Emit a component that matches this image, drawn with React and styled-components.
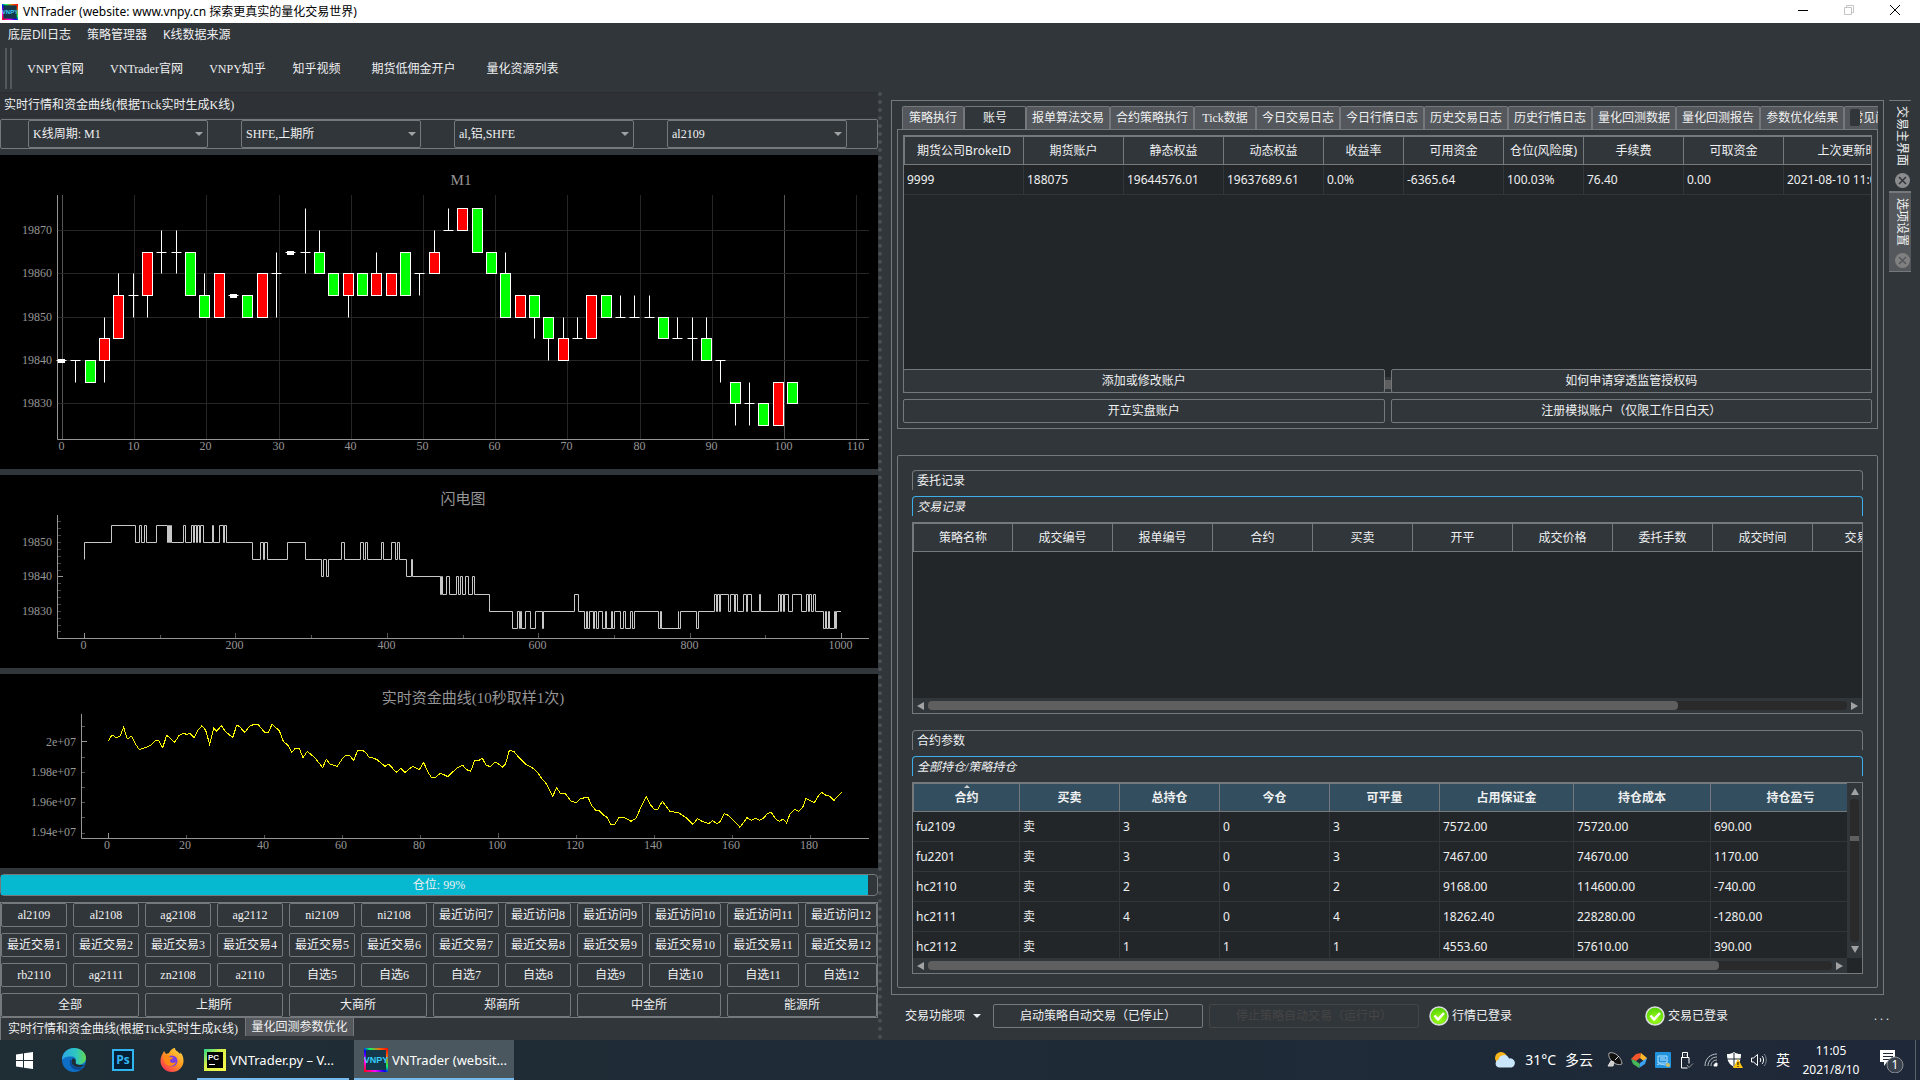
import React from 'react';
import styled, { createGlobalStyle, css } from 'styled-components';

const c = {
    bg: '#31363b',
    dark: '#232629',
    line: '#76797c',
    text: '#eff0f1',
    tab: '#54575b',
    axis: '#969696',
    blue: '#3daee9',
    cyan: '#06b9d1',
};

const song = '"Liberation Serif", "Noto Sans CJK SC", serif';
const hei = '"Noto Sans", "Noto Sans CJK SC", sans-serif';

const GlobalStyle = createGlobalStyle`
    * { box-sizing: border-box; }
    body { margin: 0; background: ${c.bg}; color: ${c.text}; font: 12px/16px ${song}; }
    button, select { font: inherit; color: inherit; margin: 0; padding: 0; border: 0; background: none; }
    svg { display: block; }
`;

/* ---------- data ---------- */

const toolbarLinks = [
    ['VNPY官网', 79], ['VNTrader官网', 103], ['VNPY知乎', 79],
    ['知乎视频', 79], ['期货低佣金开户', 115], ['量化资源列表', 103],
];

const combos = [
    ['K线周期', 'K线周期: M1'],
    ['交易所', 'SHFE,上期所'],
    ['品种', 'al,铝,SHFE'],
    ['合约', 'al2109'],
];

const range = (from, to, prefix) =>
    Array.from({ length: to - from + 1 }, (_, i) => prefix + (from + i));

const contracts = [
    'al2109', 'al2108', 'ag2108', 'ag2112', 'ni2109', 'ni2108', ...range(7, 12, '最近访问'),
    ...range(1, 12, '最近交易'),
    'rb2110', 'ag2111', 'zn2108', 'a2110', ...range(5, 12, '自选'),
];
const exchanges = ['全部', '上期所', '大商所', '郑商所', '中金所', '能源所'];

const mainTabs = [
    '策略执行', '账号', '报单算法交易', '合约策略执行', 'Tick数据', '今日交易日志', '今日行情日志',
    '历史交易日志', '历史行情日志', '量化回测数据', '量化回测报告', '参数优化结果', '常见问题',
];

const accountCols = [
    ['期货公司BrokeID', 120], ['期货账户', 100], ['静态权益', 100], ['动态权益', 100], ['收益率', 80],
    ['可用资金', 100], ['仓位(风险度)', 80], ['手续费', 100], ['可取资金', 100], ['上次更新时间', 140],
];
const accountRows = [
    ['9999', '188075', '19644576.01', '19637689.61', '0.0%', '-6365.64', '100.03%', '76.40', '0.00', '2021-08-10 11:05:01'],
];

const tradeCols = ['策略名称', '成交编号', '报单编号', '合约', '买卖', '开平', '成交价格', '委托手数', '成交时间', '交易所']
    .map(name => [name, 100]);

const positionCols = [
    ['合约', 107], ['买卖', 100], ['总持仓', 100], ['今仓', 110], ['可平量', 110],
    ['占用保证金', 134], ['持仓成本', 137], ['持仓盈亏', 160],
];
const positionRows = [
    ['fu2109', '卖', '3', '0', '3', '7572.00', '75720.00', '690.00'],
    ['fu2201', '卖', '3', '0', '3', '7467.00', '74670.00', '1170.00'],
    ['hc2110', '卖', '2', '0', '2', '9168.00', '114600.00', '-740.00'],
    ['hc2111', '卖', '4', '0', '4', '18262.40', '228280.00', '-1280.00'],
    ['hc2112', '卖', '1', '1', '1', '4553.60', '57610.00', '390.00'],
];

// open, close, high, low; all above 19800
const candles = [
    [40, 40, 40, 40], [40, 40, 40, 35], [40, 35, 40, 35], [40, 45, 50, 35], [45, 55, 60, 45],
    [55, 55, 60, 50], [55, 65, 65, 50], [65, 65, 70, 60], [65, 65, 70, 60], [65, 55, 65, 55],
    [55, 50, 60, 50], [50, 60, 60, 50], [55, 55, 55, 55], [55, 50, 55, 50], [50, 60, 60, 50],
    [60, 60, 65, 50], [65, 65, 65, 65], [65, 65, 75, 60], [65, 60, 70, 60], [60, 55, 60, 55],
    [55, 60, 60, 50], [60, 55, 60, 55], [55, 60, 65, 55], [55, 60, 60, 55], [65, 55, 65, 55],
    [60, 60, 60, 55], [60, 65, 70, 60], [70, 70, 75, 70], [70, 75, 75, 70], [75, 65, 75, 65],
    [65, 60, 65, 60], [60, 50, 65, 50], [50, 55, 55, 50], [55, 50, 55, 45], [50, 45, 50, 40],
    [40, 45, 50, 40], [45, 45, 50, 45], [45, 55, 55, 45], [55, 50, 55, 50], [50, 50, 55, 50],
    [50, 50, 55, 50], [50, 50, 55, 50], [50, 45, 50, 45], [45, 45, 50, 45], [45, 45, 50, 40],
    [45, 40, 50, 40], [40, 40, 40, 35], [35, 30, 35, 25], [30, 30, 35, 25], [30, 25, 30, 25],
    [25, 35, 35, 25], [35, 30, 35, 30],
];

// each entry: [level to return to, level of the spike, x positions where the price flips]
const flashRuns = [
    [50, 55, [332, 404, 418, 422, 431, 438, 469, 500, 503, 506, 509, 512, 549, 556, 572, 578, 583, 587, 590, 597, 600, 609, 635, 640, 656, 668, 673, 677]],
    [45, 50, [755, 781, 788, 793, 801, 860, 915]],
    [45, 40, [962, 970, 978, 983]],
    [45, 50, [1024, 1033, 1081, 1090, 1096, 1100, 1142, 1149, 1174, 1184, 1191, 1196]],
    [40, 45, [1219, 1234, 1237]],
    [35, 40, [1321, 1324, 1327, 1338, 1348, 1369, 1375, 1380, 1385, 1396, 1404, 1417, 1421]],
    [30, 25, [1467, 1537, 1550, 1556, 1560, 1564, 1576, 1591, 1604, 1625, 1629]],
    [30, 35, [1723, 1733]],
    [30, 25, [1751, 1758, 1761, 1766, 1778, 1782, 1789, 1794, 1805, 1815, 1819, 1833, 1836, 1842, 1861, 1869, 1876, 1891, 1895, 1903, 1973, 1980, 1983, 2033, 2035, 2040, 2087, 2093]],
    [30, 35, [2141, 2149, 2152, 2156, 2161, 2185, 2191, 2203, 2206, 2210, 2230, 2238, 2241, 2253, 2276, 2281, 2334, 2339, 2344, 2349, 2353, 2363, 2376, 2402, 2418, 2424, 2428, 2434, 2439, 2444]],
    [30, 25, [2470, 2475, 2478, 2484, 2487, 2501, 2504, 2508]],
];

const equity = [
    325, 829, 335, 811, 342, 813, 347, 818, 360, 814, 371, 787, 382, 822, 389, 817, 395, 814, 405, 835,
    418, 854, 430, 850, 450, 842, 468, 826, 476, 826, 488, 848, 500, 811, 511, 820, 524, 832, 537, 812,
    549, 805, 560, 808, 570, 806, 583, 818, 594, 795, 606, 782, 617, 796, 629, 838, 641, 790, 650, 799,
    664, 782, 676, 799, 698, 818, 710, 781, 718, 784, 734, 802, 749, 784, 762, 778, 775, 779, 794, 802,
    805, 802, 816, 778, 838, 797, 850, 829, 864, 841, 875, 862, 886, 850, 898, 850, 909, 878, 922, 859,
    945, 879, 968, 908, 979, 883, 991, 898, 1012, 904, 1028, 880, 1038, 871, 1048, 871, 1061, 886,
    1073, 856, 1087, 856, 1098, 863, 1108, 878, 1117, 878, 1131, 884, 1155, 904, 1166, 897, 1189, 922,
    1202, 910, 1215, 922, 1238, 904, 1258, 914, 1271, 892, 1284, 922, 1294, 937, 1306, 937, 1320, 926,
    1330, 928, 1343, 935, 1370, 910, 1388, 901, 1400, 914, 1412, 919, 1424, 887, 1434, 888, 1447, 880,
    1458, 900, 1470, 905, 1485, 892, 1495, 896, 1507, 907, 1517, 896, 1528, 856, 1542, 860, 1560, 881,
    1576, 897, 1597, 908, 1612, 922, 1625, 940, 1638, 955, 1658, 994, 1670, 968, 1681, 985, 1696, 986,
    1714, 1010, 1730, 1012, 1742, 1001, 1764, 996, 1774, 1020, 1787, 1036, 1797, 1037, 1812, 1051,
    1822, 1058, 1831, 1077, 1844, 1078, 1857, 1058, 1872, 1057, 1893, 1069, 1907, 1061, 1929, 1014,
    1939, 995, 1950, 1018, 1962, 1032, 1973, 1033, 1987, 1009, 1998, 1024, 2010, 1039, 2035, 1043,
    2058, 1058, 2079, 1078, 2092, 1061, 2108, 1070, 2126, 1076, 2138, 1067, 2150, 1076, 2160, 1070,
    2173, 1046, 2185, 1051, 2208, 1074, 2220, 1087, 2241, 1058, 2254, 1066, 2266, 1060, 2278, 1066,
    2290, 1060, 2302, 1046, 2314, 1042, 2326, 1061, 2338, 1069, 2349, 1062, 2360, 1074, 2370, 1046,
    2385, 1033, 2396, 1039, 2408, 1027, 2418, 1000, 2430, 1006, 2443, 1013, 2455, 993, 2465, 982,
    2478, 991, 2490, 994, 2502, 1006, 2525, 982,
];

/* ---------- window frame ---------- */

const Window = styled.div`
    display: flex;
    flex-direction: column;
    min-height: 100vh;
`;

const TitleBar = styled.header`
    display: flex;
    align-items: center;
    height: 23px;
    padding: 0 2px;
    gap: 5px;
    background: #fff;
    color: #000;
    font-family: ${hei};
`;

const WindowButtons = styled.div`
    display: flex;
    margin-left: auto;
`;

const WindowButton = styled.button`
    display: flex;
    justify-content: center;
    width: 46px;
    padding: 5px 0 8px;
`;

const MenuBar = styled.nav`
    display: flex;
    gap: 16px;
    padding: 4px 8px 3px;
    font-family: ${hei};
`;

const ToolBar = styled.div`
    display: flex;
    align-items: center;
    height: 46px;
    padding-left: 5px;
`;

const Handle = styled.span`
    width: 7px;
    height: 41px;
    margin: 0 4px 2px 0;
    border: solid ${c.tab};
    border-width: 0 2px;
`;

const ToolLink = styled.a`
    width: ${p => p.$w}px;
    text-align: center;
    color: inherit;
    text-decoration: none;
    white-space: nowrap;
`;

const Body = styled.main`
    flex: 1;
    display: grid;
    grid-template-columns: minmax(0, 882fr) minmax(0, 1038fr);
`;

/* ---------- left dock ---------- */

const Dock = styled.section`
    display: flex;
    flex-direction: column;
    border-right: 4px dotted #4b5055;
`;

const DockTitle = styled.h2`
    margin: 0 0 2px;
    padding: 4px;
    height: 25px;
    border: solid #2a2d31;
    border-width: 1px 0;
    background: #2e3236;
    font: inherit;
`;

const ComboBar = styled.div`
    display: flex;
    justify-content: space-between;
    padding: 0 30px 0 27px;
    margin-bottom: 6px;
    border: 1px solid ${c.line};
    border-radius: 2px;
`;

const Combo = styled.label`
    position: relative;
    width: 180px;
    height: 28px;

    &::after {
        content: '';
        position: absolute;
        right: 5px;
        top: 12px;
        border: 4px solid transparent;
        border-top-color: #a0a2a4;
        border-bottom: 0;
        pointer-events: none;
    }
`;

const Select = styled.select`
    appearance: none;
    width: 100%;
    height: 28px;
    padding: 0 4px;
    border: 1px solid ${c.line};
    border-radius: 2px;
`;

const Charts = styled.div`
    display: flex;
    flex-direction: column;
    gap: 6px;
`;

const Chart = styled.svg`
    width: 100%;
    height: auto;
    background: #000;
    fill: ${c.axis};
    font: 12px ${song};
`;

const Progress = styled.div`
    display: grid;
    height: 22px;
    margin: 6px 0;
    border: 1px solid ${c.line};
    border-radius: 4px;
    text-align: center;
    line-height: 20px;

    > * { grid-area: 1 / 1; }
`;

const ProgressFill = styled.span`
    background: ${c.cyan};
`;

const buttonLook = css`
    height: 24px;
    border: 1px solid ${c.line};
    border-radius: 2px;
    text-align: center;
    white-space: nowrap;
`;

const ContractGrid = styled.div`
    display: grid;
    grid-template-columns: repeat(9, minmax(0, 66fr)) repeat(3, minmax(0, 72fr));
    gap: 6px;
    border: 1px solid ${c.line};
`;

const ContractButton = styled.button`
    ${buttonLook}
    grid-column: span ${p => p.$span || 1};
`;

const DockTabs = styled.div`
    display: flex;
    height: 22px;
`;

const DockTab = styled.button`
    min-width: ${p => (p.$on ? 245 : 109)}px;
    height: ${p => (p.$on ? 22 : 18)}px;
    padding: 0 5px;
    border-left: 1px solid ${c.line};
    border-right: ${p => (p.$on ? 0 : 1)}px solid ${c.line};
    background: ${p => (p.$on ? c.bg : c.tab)};
`;

/* ---------- right side ---------- */

const Side = styled.section`
    display: grid;
    grid-template-columns: minmax(0, 1fr) 22px;
    grid-template-rows: 1fr 45px;
    column-gap: 5px;
    padding: 8px 9px 0;
`;

const Frame = styled.div`
    display: flex;
    flex-direction: column;
    padding: 5px 5px 6px;
    border: 1px solid ${c.line};
`;

const TabBar = styled.div`
    position: relative;
    display: flex;
    margin-left: 5px;
    overflow: hidden;
`;

const Tab = styled.button`
    flex: none;
    min-width: 62px;
    height: 23px;
    padding: 0 5px;
    border: 1px solid ${c.line};
    border-bottom: 0;
    border-radius: 2px 2px 0 0;
    background: ${p => (p.$on ? c.bg : c.tab)};
`;

const TabScroller = styled.span`
    position: absolute;
    right: 18px;
    top: 3px;
    width: 10px;
    height: 17px;
    border-radius: 2px;
    background: ${c.bg};
`;

const Pane = styled.div`
    padding: 5px;
    border: 1px solid ${c.line};
`;

const TableBox = styled.div`
    display: grid;
    grid-template-columns: minmax(0, 1fr) auto;
    grid-template-rows: 1fr 15px;
    height: ${p => p.$h}px;
    border: 1px solid ${c.line};
    background: ${c.dark};
    font-family: ${hei};
`;

const TableView = styled.div`
    overflow: hidden;
    min-height: 0;
`;

const Table = styled.table`
    table-layout: fixed;
    border-collapse: separate;
    border-spacing: 0;
    width: ${p => p.$w}px;
`;

const Th = styled.th`
    position: relative;
    height: 29px;
    padding: 0;
    border: solid ${c.line};
    border-width: 1px 1px 1px 0;
    background: ${p => (p.$blue ? '#334e5e' : c.bg)};
    font-weight: ${p => (p.$blue ? 700 : 400)};

    &:first-child { border-left-width: 1px; }
`;

const SortMark = styled.span`
    position: absolute;
    left: calc(50% - 3px);
    top: 1px;
    border: 3px solid transparent;
    border-bottom-color: #cfd1d2;
    border-top: 0;
`;

const Td = styled.td`
    height: 30px;
    padding: 0 3px;
    border: solid ${c.bg};
    border-width: 0 1px 1px 0;
    white-space: nowrap;
`;

const HBar = styled.div`
    display: flex;
    align-items: center;
    justify-content: space-between;
    padding: 0 4px;
    gap: 4px;
    background: ${c.bg};
`;

const VBar = styled(HBar)`
    flex-direction: column;
    width: 15px;
    padding: 5px 0;
`;

const Arrow = styled.span`
    border: 4px solid transparent;
    ${p => p.$to === 'left' && `border-right: 7px solid #a0a2a4; border-left: 0;`}
    ${p => p.$to === 'right' && `border-left: 7px solid #a0a2a4; border-right: 0;`}
    ${p => p.$to === 'up' && `border-bottom: 7px solid #a0a2a4; border-top: 0;`}
    ${p => p.$to === 'down' && `border-top: 7px solid #a0a2a4; border-bottom: 0;`}
`;

const Groove = styled.span`
    flex: 1;
    height: 9px;
    border-radius: 4px;
    background: #2a2a2a;
`;

const VGroove = styled(Groove)`
    width: 9px;
    padding-top: 37px;
`;

const Thumb = styled.span`
    display: block;
    height: ${p => p.$h || 9}px;
    border-radius: ${p => (p.$h ? 0 : 4)}px;
    background: #605f5f;
`;

const AccountButtons = styled.div`
    position: relative;
    display: grid;
    grid-template-columns: 1fr 1fr;
    gap: 6px;
    margin-top: -24px;
`;

const PaneButton = styled.button`
    ${buttonLook}
    background: ${c.bg};
`;

const Records = styled.div`
    display: flex;
    flex-direction: column;
    gap: 6px;
    margin-top: 26px;
    padding: 14px 14px 13px;
    border: 1px solid ${c.line};
    border-radius: 2px;
`;

const GroupTitle = styled.h3`
    height: 20px;
    margin: ${p => (p.$later ? '10px 0 0' : 0)};
    padding: 2px 4px;
    border: 1px solid ${p => (p.$active ? c.blue : c.line)};
    border-bottom: 0;
    border-radius: 4px 4px 0 0;
    font: inherit;
    font-style: ${p => (p.$active ? 'italic' : 'normal')};
`;

const SideTabs = styled.div`
    display: flex;
    flex-direction: column;
`;

const SideTab = styled.div`
    display: flex;
    flex-direction: column;
    align-items: center;
    justify-content: space-between;
    height: ${p => (p.$on ? 92 : 80)}px;
    padding: 5px 0 3px 4px;
    border: solid ${c.line};
    border-width: 1px 0;
    background: ${p => (p.$on ? c.bg : c.tab)};
`;

const SideLabel = styled.button`
    writing-mode: vertical-rl;
    text-orientation: sideways;
`;

const StatusBar = styled.footer`
    grid-column: 1 / -1;
    display: flex;
    align-items: center;
    padding: 0 22px 3px 14px;
`;

const DropButton = styled.button`
    display: flex;
    align-items: center;
    gap: 8px;
    width: 88px;

    &::after {
        content: '';
        border: 4px solid transparent;
        border-top-color: ${c.text};
        border-bottom: 0;
    }
`;

const StatusButton = styled(PaneButton)`
    width: 210px;
    margin-right: 6px;

    &:disabled {
        border-color: #454545;
        color: #454545;
    }
`;

const Status = styled.span`
    display: flex;
    align-items: center;
    gap: 3px;
    width: 216px;
    padding-left: 4px;
`;

const More = styled.span`
    display: flex;
    gap: 3px;
    margin-left: auto;
`;

/* ---------- task bar ---------- */

const TaskBar = styled.footer`
    display: flex;
    align-items: stretch;
    height: 40px;
    background: linear-gradient(90deg, #1f2d35, #1e2b37 60%, #1f2838);
    color: #fff;
    font-family: ${hei};
`;

const TaskIcon = styled.button`
    display: grid;
    place-items: center;
    width: 49px;
`;

const Task = styled.button`
    display: flex;
    align-items: center;
    gap: 4px;
    width: ${p => (p.$on ? 160 : 152)}px;
    margin-left: ${p => (p.$on ? 5 : 1)}px;
    padding: 2px 4px 0 ${p => (p.$on ? 10 : 7)}px;
    border-bottom: 2px solid #76b9ed;
    background: ${p => (p.$on ? '#4a575e' : 'none')};
    font-size: 13px;
    text-align: left;
    white-space: nowrap;
`;

const Tray = styled.div`
    display: flex;
    align-items: center;
    margin-left: auto;
    padding-right: 4px;
    border-right: 1px solid #59636d;
    margin-right: 4px;
`;

const Weather = styled.button`
    display: flex;
    align-items: center;
    gap: 9px;
    margin-right: 10px;
    font-size: 14px;
`;

const TrayIcon = styled.button`
    display: grid;
    place-items: center;
    width: 24px;
    height: 40px;
    font-size: 14px;
`;

const Clock = styled.time`
    width: 72px;
    text-align: center;
    line-height: 19px;
`;

const Notify = styled.button`
    width: 44px;
    padding-left: 12px;
`;

/* ---------- icons ---------- */

const VnpyIcon = ({ size }) => (
    <svg width={size} height={size} viewBox="0 0 24 24">
        <defs>
            <linearGradient id="rainbow" x1="0" y1="1" x2="1" y2="0">
                <stop offset="0" stopColor="#f00" />
                <stop offset="0.25" stopColor="#f0f" />
                <stop offset="0.45" stopColor="#00f" />
                <stop offset="0.6" stopColor="#0f6" />
                <stop offset="0.8" stopColor="#f60" />
                <stop offset="1" stopColor="#f00" />
            </linearGradient>
        </defs>
        <rect width="24" height="24" fill="url(#rainbow)" />
        <rect x="2" y="2" width="20" height="20" fill="#15384a" />
        <text x="12" y="15" fontSize="9" fontWeight="700" fontFamily="Liberation Sans, sans-serif" textAnchor="middle" fill="#35cdfb">VNPY</text>
    </svg>
);

const EdgeIcon = () => (
    <svg width="24" height="24" viewBox="0 0 24 24">
        <defs>
            <linearGradient id="edgeTop" x1="0" x2="1">
                <stop offset="0" stopColor="#2aa8e6" />
                <stop offset="0.6" stopColor="#2fc7c0" />
                <stop offset="1" stopColor="#62d94f" />
            </linearGradient>
        </defs>
        <circle cx="12" cy="12" r="12" fill="#0f6fc6" />
        <path d="M0 12C0 5 5 0 12 0c7 0 12 4.500 12 10 0 4-3 6.500-7 6.500-3 0-4-1-3.500-2 1.200-2 .5-5.500-3.500-6C5 8 1 10 0 12z" fill="url(#edgeTop)" />
        <path d="M8 12c-1 5 2 10 8 10 3 0 5-1 7-4-2 2-5 2-8 1.500C11 19 9 16 9.500 12z" fill="#0a4a94" />
        <path d="M10.500 10.500c-2 3-.5 7 3.500 8.500 4 1.200 7-.5 9-2.500-3 1-9 1-9.500-2 .8-2 0-4-3-4z" fill="#1f2d35" />
    </svg>
);

const PsIcon = () => (
    <svg width="22" height="22" viewBox="0 0 22 22">
        <rect x="1" y="1" width="20" height="20" fill="#061e34" stroke="#31b5f2" strokeWidth="2" />
        <text x="11" y="15" fontSize="12" fontWeight="700" fontFamily="Open Sans, sans-serif" textAnchor="middle" fill="#31b5f2">Ps</text>
    </svg>
);

const FirefoxIcon = () => (
    <svg width="24" height="24" viewBox="0 0 24 24">
        <defs>
            <linearGradient id="fox" x1="1" y1="0" x2="0.200" y2="1">
                <stop offset="0" stopColor="#ffe14a" />
                <stop offset="0.5" stopColor="#ff9a1f" />
                <stop offset="1" stopColor="#ff2f56" />
            </linearGradient>
        </defs>
        <path d="M3 5l1-2 2 3 3-1c1-3 4-5 6-5 0 3 3 3 5 6 1-.5 0-1 0-2 3 3 3.500 6 3.500 9A11.500 11 0 0 1 .5 13c0-3 1-6 2.500-8z" fill="url(#fox)" />
        <circle cx="12" cy="13" r="5.500" fill="#7b3fe0" />
        <path d="M4 8c3-1 5 0 6 1l3 .5c0 1.500-2 1.800-3 2.500-.5 3 3 4 6 2-1 4-6 5-9 3S4 11 4 8z" fill="#ff8a16" />
    </svg>
);

const PyCharmIcon = () => (
    <svg width="22" height="22" viewBox="0 0 22 22">
        <defs>
            <linearGradient id="py" x1="0" y1="0" x2="1" y2="1">
                <stop offset="0" stopColor="#21d789" />
                <stop offset="0.4" stopColor="#d6f04a" />
                <stop offset="1" stopColor="#fcf84a" />
            </linearGradient>
        </defs>
        <rect width="22" height="22" fill="url(#py)" />
        <rect x="3" y="3" width="16" height="16" fill="#000" />
        <text x="4" y="11" fontSize="8" fontWeight="700" fontFamily="Liberation Sans, sans-serif" fill="#fff">PC</text>
        <rect x="5" y="15" width="6" height="1" fill="#fff" />
    </svg>
);

const WindowsIcon = () => (
    <svg width="17" height="17" viewBox="0 0 17 17" fill="#fff">
        <path d="M0 2.500l7-1V8H0zM8 1.300L17 0v8H8zM0 9h7v6.500l-7-1zM8 9h9v8l-9-1.300z" />
    </svg>
);

const CheckIcon = () => (
    <svg width="20" height="20" viewBox="0 0 20 20">
        <defs>
            <radialGradient id="ok" cx="0.5" cy="0.700" r="0.700">
                <stop offset="0" stopColor="#a2ff1a" />
                <stop offset="1" stopColor="#4fd000" />
            </radialGradient>
        </defs>
        <circle cx="10" cy="10" r="9" fill="url(#ok)" stroke="#d9dcda" strokeWidth="1.500" />
        <path d="M5.500 9.500l3.500 4 6-6.500" fill="none" stroke="#fff" strokeWidth="2.500" />
    </svg>
);

const CloseIcon = ({ dim }) => (
    <svg width="15" height="15" viewBox="0 0 15 15">
        <circle cx="7.500" cy="7.500" r="7.500" fill={dim ? '#808080' : '#8b8c8d'} />
        <path d="M4 4l7 7M11 4l-7 7" stroke={dim ? '#54575b' : '#31363b'} strokeWidth="1.500" />
    </svg>
);

const WeatherIcon = () => (
    <svg width="21" height="16" viewBox="0 0 21 16">
        <circle cx="6" cy="6" r="6" fill="#f9b61c" />
        <path d="M4 15.500a4 4 0 0 1-.5-7.800A5.500 5.500 0 0 1 14 6.500a4.600 4.600 0 1 1 2.500 9z" fill="#c9e6fa" />
    </svg>
);

const SatelliteIcon = () => (
    <svg width="16" height="16" viewBox="0 0 16 16">
        <path d="M2 1c6-2 13 5 13 11-6 3-15-5-13-11z" fill="#111" stroke="#aaa" />
        <path d="M1 14l3-5 3 1-1 4zM8 8l4-4" fill="#ccc" stroke="#ddd" />
    </svg>
);

const CubeIcon = () => (
    <svg width="16" height="16" viewBox="0 0 16 16">
        <path d="M0 7l5-5 5-1-1 5-4 3z" fill="#f5542c" />
        <path d="M10 1l6 5-2 4-5-4z" fill="#ffb928" />
        <path d="M16 6l-2 6-6 4 1-5 4-3z" fill="#3aa0f2" />
        <path d="M0 7l5 2 4 3-1 4-6-4z" fill="#46b85a" />
    </svg>
);

const NetIcon = () => (
    <svg width="16" height="16" viewBox="0 0 16 16">
        <rect width="16" height="16" rx="1" fill="#2093dc" />
        <path d="M3 4h9v7H3zM5 6h5M5 8h6M2 13c3-3 8 2 12-1" fill="none" stroke="#b9e2ff" />
        <circle cx="13" cy="13" r="2" fill="#cdbf64" />
    </svg>
);

const UsbIcon = () => (
    <svg width="14" height="17" viewBox="0 0 14 17" fill="none" stroke="#fff">
        <path d="M2.500 5V.5h5V5M1 5.500h8v6M1.500 5v11h6M4 3h0.500M6 3h0.500" />
        <path d="M7 13l2 2.500 4-4" stroke="#999" />
    </svg>
);

const WifiIcon = () => (
    <svg width="14" height="14" viewBox="0 0 14 14" fill="none" stroke="#b9c0c6">
        <path d="M1 13C1 6 6 1 13 1M4 13c0-5 4-9 9-9M7 13c0-4 3-6 6-6" />
        <path d="M10 13c0-2 1-3 3-3v3z" fill="#fff" stroke="#fff" />
    </svg>
);

const ShieldIcon = () => (
    <svg width="16" height="16" viewBox="0 0 16 16">
        <path d="M7 0c2 1.500 4 2 7 2 0 7-2 10-7 13C2 12 0 9 0 2c3 0 5-.5 7-2z" fill="#fff" />
        <path d="M7 1v13M0 7h14" stroke="#1f2b36" />
        <path d="M11 7l5 9H6z" fill="#ffc20e" />
        <path d="M11 10v3M11 14v1" stroke="#000" />
    </svg>
);

const SpeakerIcon = () => (
    <svg width="16" height="14" viewBox="0 0 16 14" fill="none" stroke="#fff">
        <path d="M.5 5v4h2l4 3.500v-11L2.500 5zM9 5c1 1 1 3 0 4M11 3c2 2 2 6 0 8" />
        <path d="M13 1c3 3 3 9 0 12" stroke="#7c858c" />
    </svg>
);

const NotifyIcon = () => (
    <svg width="26" height="26" viewBox="0 0 26 26">
        <path d="M1 3h15v12H8l-3 4v-4H1z" fill="#fff" />
        <path d="M4 6.500h10M4 9.500h10M4 12.500h6" stroke="#1f2838" />
        <circle cx="16" cy="18" r="8" fill="#39414c" stroke="#8b9097" />
        <text x="16" y="22" fontSize="12" textAnchor="middle" fill="#fff">1</text>
    </svg>
);

/* ---------- charts ---------- */

const Axes = ({ x, bottom }) => (
    <path d={`M${x} 40V${bottom}H869`} fill="none" stroke={c.axis} />
);

const KLineChart = () => {
    const px = v => Math.round(62 + v * 7.22) + 0.5;
    const py = v => Math.round(205 + (40 - v) * 4.34) + 0.5;
    const tens = Array.from({ length: 12 }, (_, i) => i * 10);

    return (
        <Chart viewBox="0 0 878 314" role="img" aria-label="M1">
            <text x="461" y="30" fontSize="15" textAnchor="middle">M1</text>
            {tens.map(v => (
                <g key={v}>
                    <path d={`M${px(v)} 40V284`} stroke={v % 100 ? '#262626' : '#555'} />
                    <text x={px(v) - 1} y="295" textAnchor="middle">{v}</text>
                </g>
            ))}
            {[70, 60, 50, 40, 30].map(v => (
                <g key={v}>
                    <path d={`M57 ${py(v)}H869`} stroke="#262626" />
                    <text x="52" y={py(v) + 3} textAnchor="end">198{v}</text>
                </g>
            ))}
            <Axes x={57.5} bottom={284.5} />
            {candles.map(([open, close, high, low], i) => {
                const x = Math.round(61 + i * 14.33) + 0.5;
                const top = py(Math.max(open, close));
                const flat = open === close;
                return (
                    <g key={i} stroke="#fff">
                        <path d={`M${x} ${py(high)}V${py(low)}`} />
                        {flat && <path d={`M${x - 5} ${top}h10`} />}
                        {high === low && <rect x={x - 3} y={top - 1} width="6" height="3" fill="#fff" />}
                        {!flat && (
                            <rect x={x - 5} y={top} width="10" height={py(Math.min(open, close)) - top} fill={close > open ? '#f00' : '#0f0'} />
                        )}
                    </g>
                );
            })}
        </Chart>
    );
};

const FlashChart = () => {
    const px = v => Math.round(84 + v * 0.757) + 0.5;
    const py = v => Math.round(67 + (50 - v) * 3.44) + 0.5;

    let level = 50;
    let d = `M84.5 ${py(45)}V${py(50)}`;
    flashRuns.forEach(([base, spike, flips]) => {
        flips.forEach(x => {
            level = level === base ? spike : base;
            d += `H${Math.round(x / 3) + 0.5}V${py(level)}`;
        });
    });
    d += 'H841';

    return (
        <Chart viewBox="0 0 878 193" role="img" aria-label="闪电图">
            <text x="463" y="29" fontSize="15" textAnchor="middle">闪电图</text>
            {Array.from({ length: 11 }, (_, i) => i * 100).map(v => (
                <path key={v} d={`M${px(v)} 163v${v % 200 ? -3 : -5}`} stroke={v % 1000 ? '#555' : c.axis} />
            ))}
            {Array.from({ length: 17 }, (_, i) => 24 + i * 2).map(v => (
                <path key={v} d={`M58 ${py(v)}h${v === 40 ? 5 : 3}`} stroke={v === 40 ? c.axis : '#444'} />
            ))}
            {[0, 200, 400, 600, 800, 1000].map(v => (
                <text key={v} x={px(v) - 1} y="174" textAnchor="middle">{v}</text>
            ))}
            {[50, 40, 30].map(v => (
                <text key={v} x="52" y={py(v) + 3} textAnchor="end">198{v}</text>
            ))}
            <Axes x={57.5} bottom={163.5} />
            <path d={d} fill="none" stroke="#c8c8c8" />
        </Chart>
    );
};

const EquityChart = () => {
    const points = equity.map((v, i) => (i % 2 ? v / 3 - 209 : v / 3)).join(' ');
    return (
        <Chart viewBox="0 0 878 194" role="img" aria-label="实时资金曲线">
            <text x="473" y="29" fontSize="15" textAnchor="middle">实时资金曲线(10秒取样1次)</text>
            {Array.from({ length: 10 }, (_, i) => i * 20).map(v => (
                <g key={v}>
                    <path d={`M${Math.round(108 + v * 3.9) + 0.5} 164v${v % 100 ? -3 : -5}`} stroke={v ? '#555' : c.axis} />
                    <text x={Math.round(107 + v * 3.9)} y="175" textAnchor="middle">{v}</text>
                </g>
            ))}
            {[52, 67, 83, 98, 113, 128, 143, 159].map(y => (
                <path key={y} d={`M82 ${y + 0.5}h${y === 67 ? 5 : 3}`} stroke={y === 67 ? c.axis : '#555'} />
            ))}
            {['2e+07', '1.98e+07', '1.96e+07', '1.94e+07'].map((t, i) => (
                <text key={t} x="76" y={72 + i * 30} textAnchor="end">{t}</text>
            ))}
            <Axes x={81.5} bottom={164.5} />
            <polyline points={points} fill="none" stroke="#ff0" shapeRendering="crispEdges" />
        </Chart>
    );
};

/* ---------- parts ---------- */

function DataTable({ cols, rows = [], height, thumb, blue, vertical, label }) {
    return (
        <TableBox $h={height}>
            <TableView>
                <Table $w={cols.reduce((sum, col) => sum + col[1], 0)} aria-label={label}>
                    <colgroup>
                        {cols.map(([name, w]) => <col key={name} width={w} />)}
                    </colgroup>
                    <thead>
                        <tr>
                            {cols.map(([name], i) => (
                                <Th key={name} $blue={blue}>
                                    {blue && i === 0 && <SortMark />}
                                    {name}
                                </Th>
                            ))}
                        </tr>
                    </thead>
                    <tbody>
                        {rows.map((row, r) => (
                            <tr key={r}>{row.map((cell, i) => <Td key={i}>{cell}</Td>)}</tr>
                        ))}
                    </tbody>
                </Table>
            </TableView>
            {vertical ? (
                <VBar>
                    <Arrow $to="up" />
                    <VGroove><Thumb $h={5} /></VGroove>
                    <Arrow $to="down" />
                </VBar>
            ) : <span />}
            <HBar>
                <Arrow $to="left" />
                <Groove><Thumb style={{ width: `${thumb}%` }} /></Groove>
                <Arrow $to="right" />
            </HBar>
        </TableBox>
    );
}

function LeftDock() {
    const position = 99;
    return (
        <Dock>
            <DockTitle>实时行情和资金曲线(根据Tick实时生成K线)</DockTitle>
            <ComboBar>
                {combos.map(([name, value]) => (
                    <Combo key={name}>
                        <Select aria-label={name} defaultValue={value}>
                            <option>{value}</option>
                        </Select>
                    </Combo>
                ))}
            </ComboBar>
            <Charts>
                <KLineChart />
                <FlashChart />
                <EquityChart />
            </Charts>
            <Progress role="progressbar" aria-label="仓位" aria-valuenow={position}>
                <ProgressFill style={{ width: `${position}%` }} />
                <span>仓位: {position}%</span>
            </Progress>
            <ContractGrid>
                {contracts.map(name => <ContractButton key={name}>{name}</ContractButton>)}
                {exchanges.map(name => <ContractButton key={name} $span={2}>{name}</ContractButton>)}
            </ContractGrid>
            <DockTabs>
                <DockTab $on>实时行情和资金曲线(根据Tick实时生成K线)</DockTab>
                <DockTab>量化回测参数优化</DockTab>
            </DockTabs>
        </Dock>
    );
}

function RightSide() {
    return (
        <Side>
            <Frame>
                <TabBar>
                    {mainTabs.map(name => <Tab key={name} $on={name === '账号'}>{name}</Tab>)}
                    <TabScroller />
                </TabBar>
                <Pane>
                    <DataTable label="账号" cols={accountCols} rows={accountRows} height={258} thumb={82} />
                    <AccountButtons>
                        <PaneButton>添加或修改账户</PaneButton>
                        <PaneButton>如何申请穿透监管授权码</PaneButton>
                        <PaneButton>开立实盘账户</PaneButton>
                        <PaneButton>注册模拟账户（仅限工作日白天）</PaneButton>
                    </AccountButtons>
                </Pane>
                <Records>
                    <GroupTitle>委托记录</GroupTitle>
                    <GroupTitle $active>交易记录</GroupTitle>
                    <DataTable label="交易记录" cols={tradeCols} height={192} thumb={81.6} />
                    <GroupTitle $later>合约参数</GroupTitle>
                    <GroupTitle $active>全部持仓/策略持仓</GroupTitle>
                    <DataTable label="持仓" cols={positionCols} rows={positionRows} height={192} thumb={87.5} blue vertical />
                </Records>
            </Frame>
            <SideTabs>
                <SideTab $on>
                    <SideLabel>交易主界面</SideLabel>
                    <button aria-label="关闭交易主界面"><CloseIcon /></button>
                </SideTab>
                <SideTab>
                    <SideLabel>选项设置</SideLabel>
                    <button aria-label="关闭选项设置"><CloseIcon dim /></button>
                </SideTab>
            </SideTabs>
            <StatusBar>
                <DropButton>交易功能项</DropButton>
                <StatusButton>启动策略自动交易（已停止）</StatusButton>
                <StatusButton disabled>停止策略自动交易（运行中）</StatusButton>
                <Status><CheckIcon />行情已登录</Status>
                <Status><CheckIcon />交易已登录</Status>
                <More><span>.</span><span>.</span><span>.</span></More>
            </StatusBar>
        </Side>
    );
}

export default function App() {
    return (
        <Window>
            <GlobalStyle />
            <TitleBar>
                <VnpyIcon size={16} />
                <span>VNTrader (website: www.vnpy.cn 探索更真实的量化交易世界)</span>
                <WindowButtons>
                    <WindowButton aria-label="最小化">
                        <svg width="10" height="10" stroke="#000"><path d="M0 5.500h10" /></svg>
                    </WindowButton>
                    <WindowButton aria-label="还原">
                        <svg width="10" height="10" fill="none" stroke="#c4c4c4"><path d="M.5 2.500h7v7h-7zM2.500 2V.5h7v7H8" /></svg>
                    </WindowButton>
                    <WindowButton aria-label="关闭">
                        <svg width="10" height="10" stroke="#000"><path d="M0 0l10 10M10 0L0 10" /></svg>
                    </WindowButton>
                </WindowButtons>
            </TitleBar>
            <MenuBar>
                <button>底层Dll日志</button>
                <button>策略管理器</button>
                <button>K线数据来源</button>
            </MenuBar>
            <ToolBar>
                <Handle />
                {toolbarLinks.map(([name, w]) => <ToolLink key={name} href="#" $w={w}>{name}</ToolLink>)}
            </ToolBar>
            <Body>
                <LeftDock />
                <RightSide />
            </Body>
            <TaskBar>
                <TaskIcon aria-label="开始"><WindowsIcon /></TaskIcon>
                <TaskIcon aria-label="Edge"><EdgeIcon /></TaskIcon>
                <TaskIcon aria-label="Photoshop"><PsIcon /></TaskIcon>
                <TaskIcon aria-label="Firefox"><FirefoxIcon /></TaskIcon>
                <Task><PyCharmIcon />VNTrader.py – V...</Task>
                <Task $on><VnpyIcon size={24} />VNTrader (websit...</Task>
                <Tray>
                    <Weather><WeatherIcon /><span>31°C</span><span>多云</span></Weather>
                    <TrayIcon aria-label="卫星"><SatelliteIcon /></TrayIcon>
                    <TrayIcon aria-label="工具"><CubeIcon /></TrayIcon>
                    <TrayIcon aria-label="网络助手"><NetIcon /></TrayIcon>
                    <TrayIcon aria-label="USB"><UsbIcon /></TrayIcon>
                    <TrayIcon aria-label="无线网络"><WifiIcon /></TrayIcon>
                    <TrayIcon aria-label="安全中心"><ShieldIcon /></TrayIcon>
                    <TrayIcon aria-label="音量"><SpeakerIcon /></TrayIcon>
                    <TrayIcon>英</TrayIcon>
                    <Clock>11:05<br />2021/8/10</Clock>
                    <Notify aria-label="通知"><NotifyIcon /></Notify>
                </Tray>
            </TaskBar>
        </Window>
    );
}
